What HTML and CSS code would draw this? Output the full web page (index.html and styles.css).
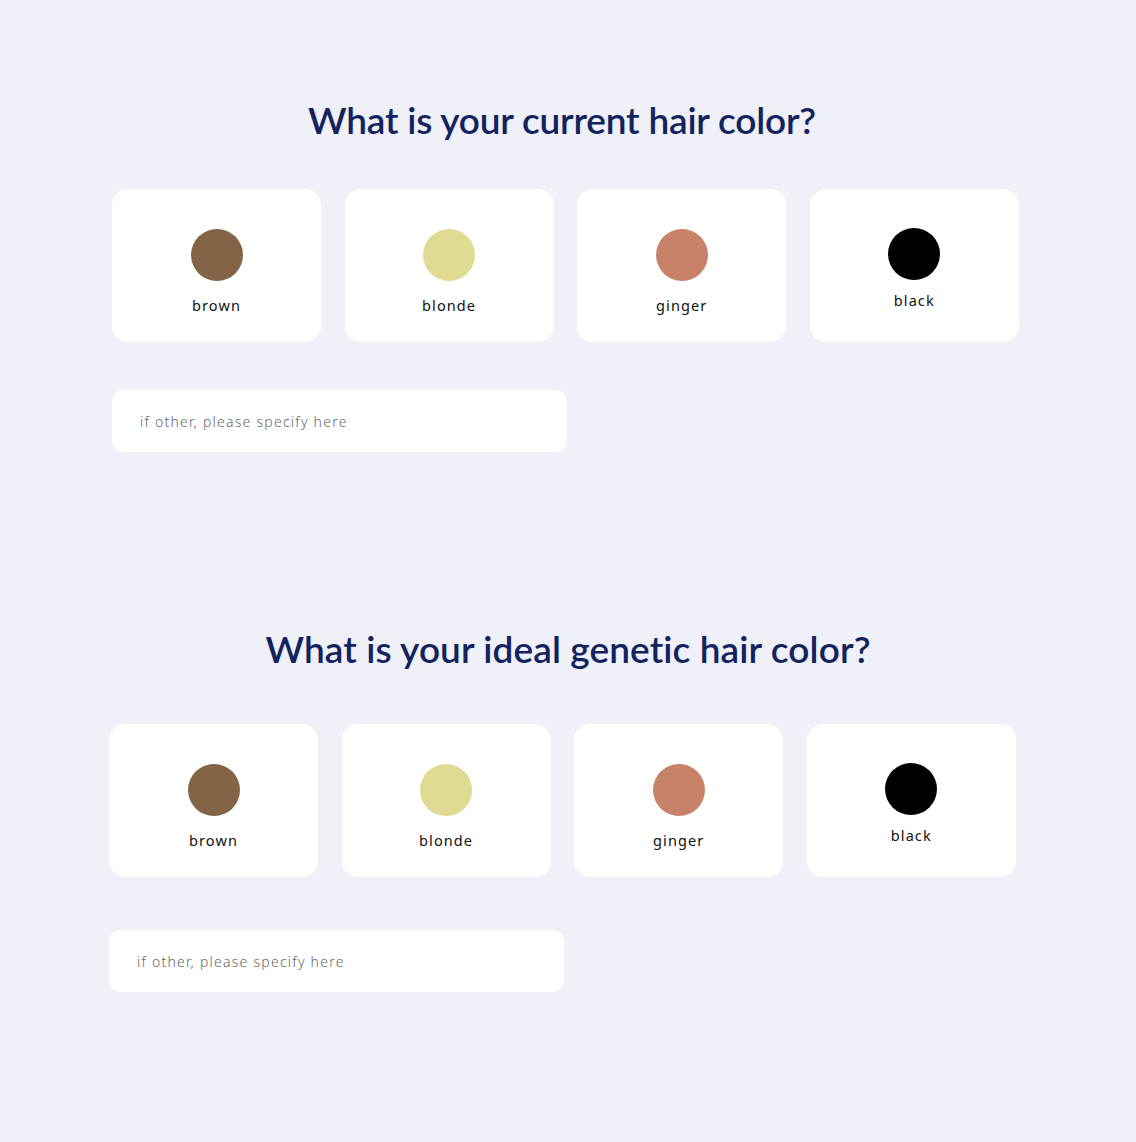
FILE: index.html
```html
<!DOCTYPE html>
<html lang="en">
<head>
<meta charset="utf-8">
<title>Hair color</title>
<link rel="stylesheet" href="styles.css">
</head>
<body>
<main class="page">
  <section class="question question--first">
    <h2 class="question__title">What is your current hair color?</h2>
    <div class="options">
      <label class="option"><span class="swatch swatch--brown"></span><span class="option__name">brown</span></label>
      <label class="option"><span class="swatch swatch--blonde"></span><span class="option__name">blonde</span></label>
      <label class="option"><span class="swatch swatch--ginger"></span><span class="option__name">ginger</span></label>
      <label class="option option--black"><span class="swatch swatch--black"></span><span class="option__name">black</span></label>
    </div>
    <input class="other" type="text" placeholder="if other, please specify here">
  </section>
  <section class="question question--second">
    <h2 class="question__title">What is your ideal genetic hair color?</h2>
    <div class="options">
      <label class="option"><span class="swatch swatch--brown"></span><span class="option__name">brown</span></label>
      <label class="option"><span class="swatch swatch--blonde"></span><span class="option__name">blonde</span></label>
      <label class="option"><span class="swatch swatch--ginger"></span><span class="option__name">ginger</span></label>
      <label class="option option--black"><span class="swatch swatch--black"></span><span class="option__name">black</span></label>
    </div>
    <input class="other" type="text" placeholder="if other, please specify here">
  </section>
</main>
</body>
</html>
```
FILE: styles.css
```css
* { box-sizing: border-box; }
html, body {
  margin: 0;
  padding: 0;
  background: #eff0f8;
}
body {
  font-family: "Noto Sans", "Open Sans", sans-serif;
  width: 1136px;
  height: 1142px;
  overflow: hidden;
}
.page {
  display: flex;
  flex-direction: column;
}
.question {
  display: flex;
  flex-direction: column;
  width: 906px;
}
.question--first {
  margin-left: 112px;
  padding-top: 96px;
}
.question--second {
  margin-left: 109px;
  padding-top: 173px;
}
.question__title {
  margin: 0;
  text-align: center;
  font-family: "Lato", sans-serif;
  font-weight: 600;
  font-size: 37px;
  line-height: 48px;
  color: #13235d;
  letter-spacing: -0.2px;
}
.question--first .question__title { margin-bottom: 45px; margin-left: -6px; }
.question--second .question__title { margin-bottom: 51px; margin-left: 12px; letter-spacing: 0.1px; }
.options {
  display: grid;
  grid-template-columns: repeat(4, 209px);
  column-gap: 23.6px;
}
.option {
  height: 153px;
  background: #ffffff;
  border-radius: 16px;
  display: flex;
  flex-direction: column;
  align-items: center;
  padding-top: 40px;
}
.option--black { padding-top: 39px; }
.swatch {
  width: 52px;
  height: 52px;
  border-radius: 50%;
  display: block;
}
.swatch--brown { background: #836446; }
.swatch--blonde { background: #dfdb93; }
.swatch--ginger { background: #c9826a; }
.swatch--black { background: #000000; }
.option__name {
  margin-top: 14px;
  font-size: 14.5px;
  line-height: 20px;
  letter-spacing: 1.1px;
  color: #111111;
}
.option--black .option__name { margin-top: 10px; }
.other {
  margin-top: 48px;
  width: 455px;
  height: 62px;
  border: none;
  border-radius: 12px;
  background: #ffffff;
  padding: 0 28px;
  font-family: "Noto Sans", sans-serif;
  font-size: 14px;
  letter-spacing: 1.25px;
  color: #444;
  outline: none;
}
.question--second .other { margin-top: 53px; }
.other::placeholder {
  color: #666666;
  font-weight: 300;
}
```
